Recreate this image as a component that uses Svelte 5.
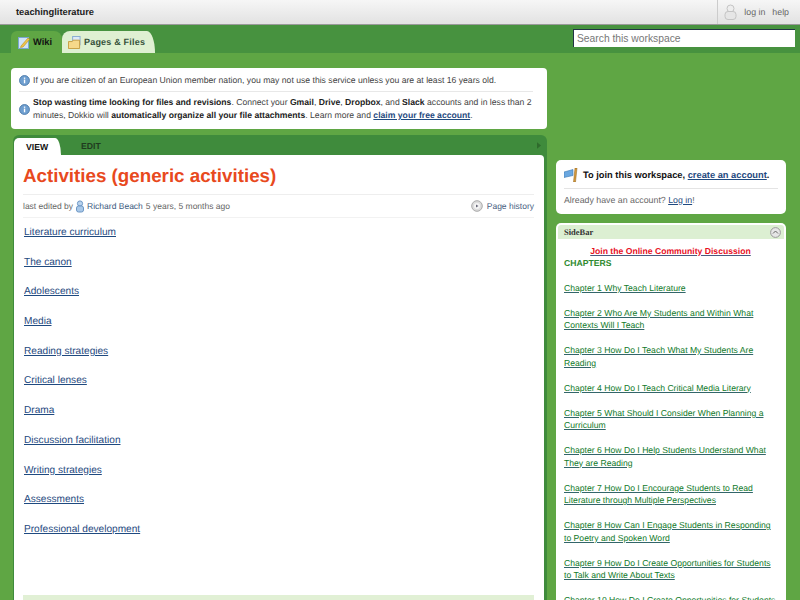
<script>
  const links = ['Literature curriculum','The canon','Adolescents','Media','Reading strategies','Critical lenses','Drama','Discussion facilitation','Writing strategies','Assessments','Professional development'];
  const chapters = [
    'Chapter 1 Why Teach Literature',
    'Chapter 2 Who Are My Students and Within What Contexts Will I Teach',
    'Chapter 3 How Do I Teach What My Students Are Reading',
    'Chapter 4 How Do I Teach Critical Media Literary',
    'Chapter 5 What Should I Consider When Planning a Curriculum',
    'Chapter 6 How Do I Help Students Understand What They are Reading',
    'Chapter 7 How Do I Encourage Students to Read Literature through Multiple Perspectives',
    'Chapter 8 How Can I Engage Students in Responding to Poetry and Spoken Word',
    'Chapter 9 How Do I Create Opportunities for Students to Talk and Write About Texts',
    'Chapter 10 How Do I Create Opportunities for Students'
  ];
</script>

<div class="page">
  <header class="top">
    <div class="brand">teachingliterature</div>
    <div class="account">
      <svg class="person" width="13" height="16" viewBox="0 0 13 16"><circle cx="6.500" cy="4.500" r="3.500" fill="#eee" stroke="#c4c4c4"/><rect x="1" y="7.500" width="11" height="8" rx="3" fill="#e6e6e6" stroke="#c4c4c4"/></svg>
      <span>log in</span><span class="help">help</span>
    </div>
  </header>

  <nav class="bar">
    <div class="tabs">
      <div class="tab on">
        <svg width="12" height="13" viewBox="0 0 12 13"><rect x=".5" y="1.500" width="10" height="11" fill="#cfe4f7" stroke="#7ba6cf"/><path d="M3 10 L10 2 L11.500 3.500 L5 11 L2.500 11.500Z" fill="#f0c64a" stroke="#b98a1e" stroke-width=".6"/></svg>
        Wiki
      </div>
      <div class="tab alt">
        <svg width="13" height="13" viewBox="0 0 14 14"><rect x="5" y=".5" width="8" height="9" fill="#dbe9f8" stroke="#86a9cf"/><path d="M.5 6h4l1-1.500h7V13.500H.5Z" fill="#f6d98a" stroke="#c59a3b"/></svg>
        Pages &amp; Files
      </div>
    </div>
    <input class="search" placeholder="Search this workspace" />
  </nav>

  <div class="body">
    <div class="left">
      <section class="notice">
        <div class="note first">
          <svg class="info" width="11" height="11" viewBox="0 0 12 12"><circle cx="6" cy="6" r="5.400" fill="#6f9fd0" stroke="#4a79aa"/><rect x="5.300" y="5" width="1.500" height="4" fill="#fff"/><rect x="5.300" y="2.800" width="1.500" height="1.400" fill="#fff"/></svg>
          <p>If you are citizen of an European Union member nation, you may not use this service unless you are at least 16 years old.</p>
        </div>
        <div class="note">
          <svg class="info" width="11" height="11" viewBox="0 0 12 12"><circle cx="6" cy="6" r="5.400" fill="#6f9fd0" stroke="#4a79aa"/><rect x="5.300" y="5" width="1.500" height="4" fill="#fff"/><rect x="5.300" y="2.800" width="1.500" height="1.400" fill="#fff"/></svg>
          <p><b>Stop wasting time looking for files and revisions</b>. Connect your <b>Gmail</b>, <b>Drive</b>, <b>Dropbox</b>, and <b>Slack</b> accounts and in less than 2 minutes, Dokkio will <b>automatically organize all your file attachments</b>. Learn more and <a class="lnk b" href="#a">claim your free account</a>.</p>
        </div>
      </section>

      <section class="main">
        <div class="subtabs">
          <div class="view">VIEW</div>
          <div class="edit">EDIT</div>
          <svg class="arrow" width="4" height="7" viewBox="0 0 5 8"><path d="M0 0L5 4L0 8Z" fill="#2f6b2c"/></svg>
        </div>
        <div class="content">
          <h1>Activities (generic activities)</h1>
          <div class="meta">
            <div class="by">
              last edited by
              <svg width="8" height="13" viewBox="0 0 8 13"><circle cx="4" cy="3.500" r="2.600" fill="#b9d3ee" stroke="#6d97c4"/><rect x=".5" y="6" width="7" height="6" rx="2" fill="#a9c8e8" stroke="#6d97c4"/></svg>
              <span class="name">Richard Beach</span> 5 years, 5 months ago
            </div>
            <div class="hist">
              <svg width="12" height="12" viewBox="0 0 12 12"><circle cx="6" cy="6" r="5.300" fill="#dcdcdc" stroke="#aaa"/><circle cx="6" cy="6" r="3" fill="#f5f5f5"/><path d="M5 4.500L7.500 6L5 7.500Z" fill="#667"/></svg>
              Page history
            </div>
          </div>
          <ul>
            {#each links as l}
              <li><a class="lnk" href="#a">{l}</a></li>
            {/each}
          </ul>
          <div class="footbar"></div>
        </div>
      </section>
    </div>

    <aside class="side">
      <section class="join">
        <div class="joinhead">
          <svg width="14" height="14" viewBox="0 0 14 14"><path d="M0 4L9 1.500V7.500L0 9.500Z" fill="#6aa7e0" stroke="#3d78b3" stroke-width=".6"/><path d="M11 0L9.500 14H11.500L13 0Z" fill="#d79a3a" stroke="#8e6320" stroke-width=".5"/></svg>
          <b>To join this workspace, <a class="lnk" href="#a">create an account</a>.</b>
        </div>
        <p>Already have an account? <a class="lnk" href="#a">Log in</a>!</p>
      </section>

      <section class="sidebar">
        <div class="sbhead">
          <span>SideBar</span>
          <svg width="11" height="11" viewBox="0 0 11 11"><circle cx="5.500" cy="5.500" r="4.900" fill="#e6e6e6" stroke="#999"/><path d="M3 6.500L5.500 4L8 6.500" fill="none" stroke="#666" stroke-width="1"/></svg>
        </div>
        <div class="sbbody">
          <a class="discuss" href="#a">Join the Online Community Discussion</a>
          <div class="chap">CHAPTERS</div>
          {#each chapters as c}
            <p><a class="glnk" href="#a">{c}</a></p>
          {/each}
        </div>
      </section>
    </aside>
  </div>
</div>

<style>
  :global(body) { margin: 0; background: #5fa644; }
  .page { width: 800px; height: 600px; overflow: hidden; background: #5fa644; font-family: "Liberation Sans", Arial, sans-serif; font-size: 9px; color: #333; text-rendering: geometricPrecision; }

  .top { height: 24px; display: flex; justify-content: space-between; align-items: center; background: linear-gradient(#f6f6f6, #e2e2e2); border-bottom: 1px solid #999; }
  .brand { margin-left: 16px; font-weight: bold; font-size: 9.300px; color: #222; }
  .account { height: 24px; display: flex; align-items: center; border-left: 1px solid #ccc; padding-left: 6px; margin-right: 11px; color: #666; font-size: 8.800px; }
  .person { margin-right: 7px; }
  .help { margin-left: 7px; }

  .bar { height: 28px; display: flex; justify-content: space-between; background: #47923f; }
  .tabs { display: flex; align-items: flex-end; padding-left: 11px; height: 28px; }
  .tab { height: 22px; display: flex; align-items: center; gap: 3px; font-weight: bold; box-sizing: border-box; }
  .tab.on { width: 51px; padding-left: 7px; background: #5fa644; color: #111; font-size: 9.300px; border-radius: 6px 8px 0 0; }
  .tab.alt { width: 93px; padding-left: 6px; background: #dff0d2; color: #36513a; font-size: 9px; letter-spacing: .2px; border-radius: 8px 6px 0 0; border-top-right-radius: 8px 22px; }
  .search { width: 216px; height: 17px; margin: 4px 5px 0 0; padding: 0 2px 0 3px; box-sizing: content-box; border: 0; border-top: 1px solid #234; border-left: 1px solid #234; background: #fff; font: 10.300px "Liberation Sans", Arial, sans-serif; outline: none; }
  .search::placeholder { color: #777; opacity: 1; }

  .body { display: flex; padding: 15px 14px 0 11px; gap: 9px; align-items: flex-start; }
  .left { width: 536px; flex: none; }
  .notice { background: #fff; border-radius: 4px; padding: 6px 14px 7px 8px; font-size: 8.650px; line-height: 13px; color: #444; }
  .note { display: flex; gap: 3px; align-items: center; }
  .note.first { padding-bottom: 4px; border-bottom: 1px solid #e8e8e8; margin-bottom: 4px; }
  .note p { margin: 0; flex: 1; }
  .note b { color: #222; }
  .info { flex: none; }

  .main { margin: 6px 0 0 2px; background: #3f8b3c; border-radius: 6px 6px 0 0; padding: 0 3px 0 1px; width: 530px; }
  .subtabs { height: 20px; display: flex; align-items: flex-end; position: relative; font-weight: bold; font-size: 8.700px; color: #1f3b1f; }
  .view { width: 47px; height: 17px; padding-left: 12px; box-sizing: border-box; background: #fff; border-radius: 5px 6px 0 0; border-top-right-radius: 6px 17px; line-height: 18px; color: #111; }
  .edit { margin-left: 20px; height: 20px; line-height: 23px; }
  .arrow { position: absolute; right: 3px; top: 7px; }
  .content { background: #fff; border-radius: 0 4px 0 0; padding: 0 10px 0 9px; height: 445px; overflow: hidden; }
  h1 { margin: 0; padding: 9px 0 6px; font-size: 18.750px; line-height: 24px; color: #e8491d; font-weight: bold; }
  .meta { display: flex; justify-content: space-between; align-items: center; height: 22px; border-top: 1px solid #eee; border-bottom: 1px solid #f2f2f2; font-size: 8.500px; color: #666; }
  .by { display: flex; align-items: center; gap: 3px; }
  .name { color: #3c5a80; }
  .hist { display: flex; align-items: center; gap: 4px; color: #47607f; }
  ul { list-style: none; margin: 0; padding: 8px 0 0 1px; }
  li { height: 29.700px; font-size: 10.100px; line-height: 13px; }
  .lnk { color: #1f4a80; text-decoration: underline; }
  .lnk.b { font-weight: bold; }
  .footbar { height: 30px; margin-top: 42px; background: #e1f0d5; }

  .side { width: 230px; padding-top: 92px; flex: none; }
  .join { background: #fff; border-radius: 5px; padding: 0 8px 0 8px; height: 54px; box-sizing: border-box; }
  .joinhead { display: flex; align-items: center; gap: 5px; padding: 1px 0 0 0; height: 29px; box-sizing: border-box; border-bottom: 1px solid #e4e4e4; font-size: 9.300px; color: #111; }
  .join p { margin: 6px 0 0; font-size: 8.800px; color: #666; }
  .sidebar { margin-top: 9px; background: #fff; border-radius: 5px 5px 0 0; padding: 2px; }
  .sbhead { height: 14px; display: flex; justify-content: space-between; align-items: center; background: #dcefd2; padding: 0 3px 0 6px; font: bold 8.500px "Liberation Serif", serif; color: #333; border-radius: 3px 3px 0 0; }
  .sbbody { padding: 6px 7px 0 6px; font-size: 8.650px; line-height: 12.500px; }
  .discuss { display: block; margin-bottom: -1px; text-align: center; color: #e8111f; font-weight: bold; text-decoration: underline; text-decoration-color: #4a5a80; }
  .chap { color: #2f8a2f; font-weight: bold; }
  .sbbody p { margin: 12.500px 0 0; }
  .glnk { color: #127a2a; text-decoration: underline; text-decoration-color: #33666a; }
</style>
